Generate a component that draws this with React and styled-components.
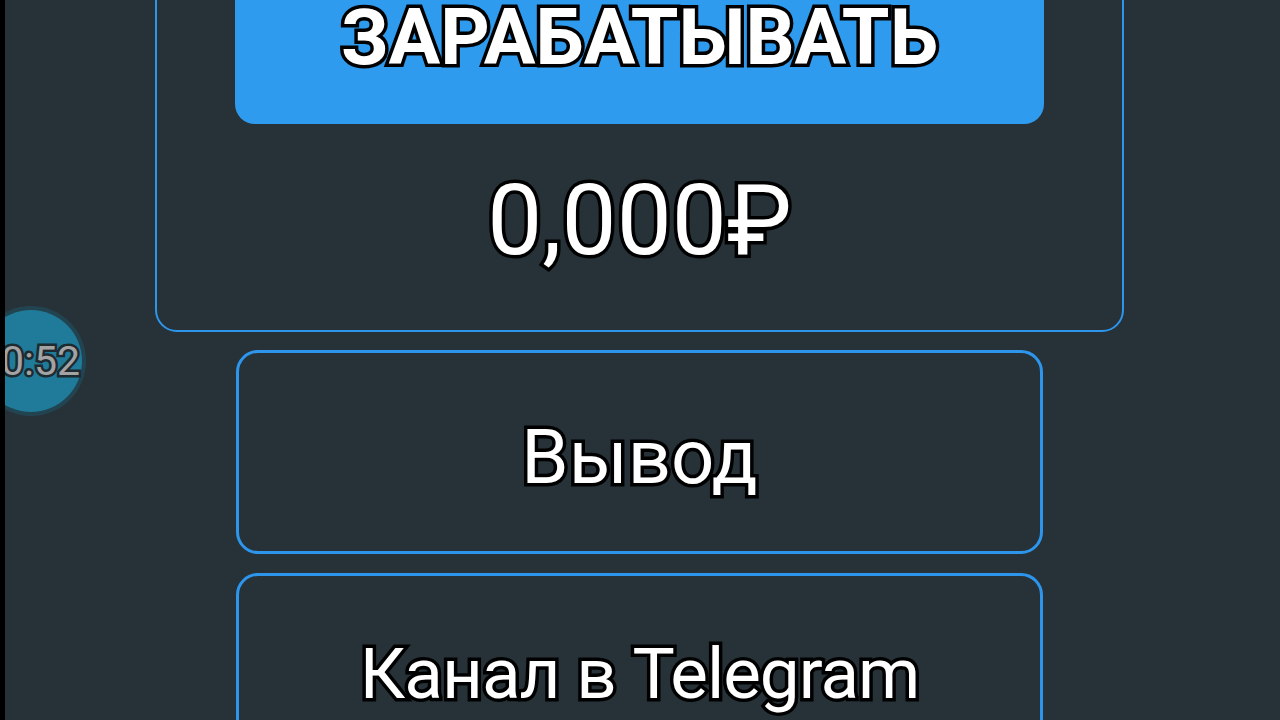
import styled, {createGlobalStyle} from 'styled-components'

const GlobalStyle = createGlobalStyle`
  html, body {
    margin: 0;
    padding: 0;
    background: #263238;
  }
  * {
    box-sizing: border-box;
  }
`

const App = () => {
  return(
    <>
      <GlobalStyle />
      <Page>
        <Timer>
          <TimerText>0:52</TimerText>
        </Timer>
        <Column>
          <BalanceCard>
            <EarnButton>
              <OutlinedText $size={77} $weight={700}>ЗАРАБАТЫВАТЬ</OutlinedText>
            </EarnButton>
            <Amount>
              <OutlinedText $size={98}>0,000₽</OutlinedText>
            </Amount>
          </BalanceCard>
          <ActionButton $shift={10}>
            <OutlinedText $size={76}>Вывод</OutlinedText>
          </ActionButton>
          <ActionButton $shift={-4}>
            <OutlinedText $size={71} $spacing={-1}>Канал в Telegram</OutlinedText>
          </ActionButton>
        </Column>
      </Page>
    </>
  )
}

const Page = styled.div`
  position: relative;
  height: 100vh;
  overflow: hidden;
  border-left: 5px solid #000;
  padding-right: 6px;
  background: #263238;
  font-family: Roboto, "Noto Sans", sans-serif;
`
const Column = styled.div`
  display: flex;
  flex-direction: column;
  align-items: center;
  gap: 18px;
  margin-top: -70px;
`
const BalanceCard = styled.div`
  width: 969px;
  border: 2px solid #2d96ec;
  border-radius: 22px;
  padding: 24px 78px 60px;
  display: flex;
  flex-direction: column;
  align-items: stretch;
  gap: 48px;
`
const EarnButton = styled.div`
  background: #2f9bee;
  border-radius: 20px;
  padding: 44px 0 47px;
  display: flex;
  justify-content: center;
`
const Amount = styled.div`
  display: flex;
  justify-content: center;
`
const ActionButton = styled.div`
  width: 807px;
  height: 204px;
  flex-shrink: 0;
  border: 3px solid #2d96ec;
  border-radius: 22px;
  display: flex;
  align-items: center;
  justify-content: center;
  padding-top: ${p => p.$shift > 0 ? p.$shift : 0}px;
  padding-bottom: ${p => p.$shift < 0 ? -p.$shift : 0}px;
  & + & {
    margin-top: 1px;
  }
`
const OutlinedText = styled.span`
  font-size: ${p => p.$size}px;
  font-weight: ${p => p.$weight || 400};
  letter-spacing: ${p => p.$spacing || 0}px;
  line-height: 1;
  color: #fff;
  white-space: nowrap;
  -webkit-text-stroke: 7px #000;
  paint-order: stroke fill;
`
const Timer = styled.div`
  position: absolute;
  left: -25px;
  top: 310px;
  width: 102px;
  height: 102px;
  border-radius: 50%;
  background: #1f7b99;
  box-shadow: 0 0 0 4px rgba(31, 90, 112, 0.45);
  display: flex;
  align-items: center;
  justify-content: flex-end;
  padding-right: 2px;
  z-index: 2;
`
const TimerText = styled.span`
  font-size: 41px;
  line-height: 1;
  color: #a3a3a3;
  -webkit-text-stroke: 5px #1d2a30;
  paint-order: stroke fill;
  white-space: nowrap;
`

export default App
